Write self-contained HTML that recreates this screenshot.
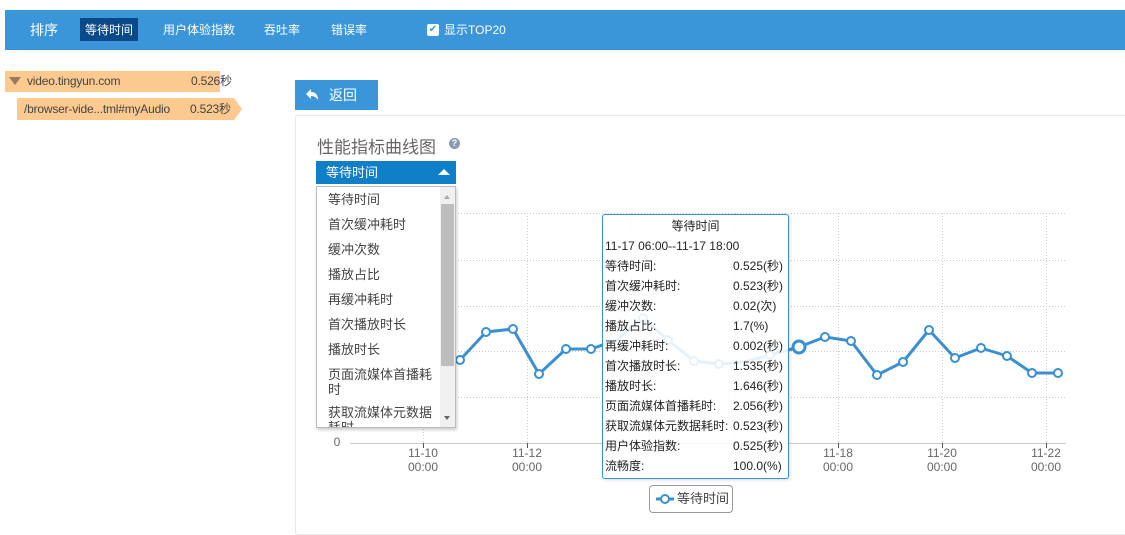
<!DOCTYPE html>
<html><head><meta charset="utf-8"><style>
*{margin:0;padding:0;box-sizing:border-box}
body{width:1125px;height:522px;background:#fff;font-family:"Liberation Sans","Noto Sans CJK SC",sans-serif;position:relative;overflow:hidden;color:#333}
.abs{position:absolute}
.nav{left:5px;top:10px;width:1120px;height:40px;background:#3a95d9}
.nav span{position:absolute;top:12px;font-size:12px;color:#fff;line-height:16px}
.tree{font-size:12px;color:#444;line-height:20px;letter-spacing:-0.2px}
.dd div{font-size:13px;color:#444;height:25px;line-height:25px;padding-left:11px}
.tt div{font-size:12px;line-height:20px;height:20px;color:#222;white-space:nowrap}
</style></head><body>
<div class="abs nav">
<span style="left:25px;font-size:14px">排序</span>
<div class="abs" style="left:75px;top:8px;width:58px;height:23px;background:#0a4a88"></div>
<span style="left:80px">等待时间</span>
<span style="left:158px">用户体验指数</span>
<span style="left:259px">吞吐率</span>
<span style="left:326px">错误率</span>
<div class="abs" style="left:422px;top:14px;width:12px;height:12px;background:#fff;border-radius:2px;color:#3a95d9;font-size:10px;line-height:12px;text-align:center">✔</div>
<span style="left:439px">显示TOP20</span>
</div>
<div class="abs tree" style="left:5px;top:71px;width:215px;height:21px;background:#fcc98f"></div>
<div class="abs" style="left:9px;top:77px;width:0;height:0;border-left:6px solid transparent;border-right:6px solid transparent;border-top:8px solid #9a7a5a"></div>
<div class="abs tree" style="left:27px;top:71px">video.tingyun.com</div>
<div class="abs tree" style="left:191px;top:71px">0.526秒</div>
<div class="abs" style="left:17px;top:98px;width:217px;height:22px;background:#fcc98f"></div>
<div class="abs" style="left:234px;top:98px;width:0;height:0;border-top:11px solid transparent;border-bottom:11px solid transparent;border-left:8px solid #fcc98f"></div>
<div class="abs tree" style="left:24px;top:99px">/browser-vide...tml#myAudio</div>
<div class="abs tree" style="left:190px;top:99px">0.523秒</div>

<div class="abs" style="left:295px;top:80px;width:83px;height:30px;background:#3a95d9;color:#fff;font-size:14px;line-height:30px">
<svg class="abs" style="left:10px;top:8px" width="14" height="14"><path d="M1 6 L6 1 L6 4 C10 4 13 6 13 12 C11 9 9 8 6 8 L6 11 Z" fill="#fff"/></svg>
<span style="position:absolute;left:34px">返回</span></div>
<div class="abs" style="left:295px;top:115px;width:840px;height:420px;border:1px solid #e8e8e8;border-radius:3px"></div>
<div class="abs" style="left:317px;top:133px;font-size:17px;color:#666">性能指标曲线图</div>
<div class="abs" style="left:449px;top:138px;width:11px;height:11px;border-radius:50%;background:#8a9bb0;color:#fff;font-size:9px;line-height:11px;text-align:center;font-weight:bold">?</div>

<svg class="abs" style="left:0;top:0" width="1125" height="522">
<g stroke="#ccc" stroke-dasharray="1,2" stroke-width="1">
<line x1="350" y1="213.5" x2="1066" y2="213.5"/><line x1="350" y1="260.5" x2="1066" y2="260.5"/><line x1="350" y1="306.5" x2="1066" y2="306.5"/><line x1="350" y1="351.5" x2="1066" y2="351.5"/><line x1="350" y1="397.5" x2="1066" y2="397.5"/>
<line x1="423.5" y1="213" x2="423.5" y2="443"/><line x1="527.5" y1="213" x2="527.5" y2="443"/><line x1="631.5" y1="213" x2="631.5" y2="443"/><line x1="735.5" y1="213" x2="735.5" y2="443"/><line x1="838.5" y1="213" x2="838.5" y2="443"/><line x1="942.5" y1="213" x2="942.5" y2="443"/><line x1="1046.5" y1="213" x2="1046.5" y2="443"/>
</g>
<line x1="350" y1="443.5" x2="1066" y2="443.5" stroke="#ccc"/>
<g stroke="#555"><line x1="423.5" y1="443" x2="423.5" y2="448"/><line x1="527.5" y1="443" x2="527.5" y2="448"/><line x1="838.5" y1="443" x2="838.5" y2="448"/><line x1="942.5" y1="443" x2="942.5" y2="448"/><line x1="1046.5" y1="443" x2="1046.5" y2="448"/></g>
<polyline fill="none" stroke="#3a8fd0" stroke-width="3" stroke-linejoin="round" points="433,352 460,360 486,332 513,329 539,374 566,349 591,349 617,340 643,318 668,340 694,361 719,364 745,362 770,355 799,347 825,337 851,341 877,375 903,362 929,330 955,358 981,348 1007,356 1032,373 1058,373"/>
<g fill="#fff" stroke="#3a8fd0" stroke-width="2">
<circle cx="460" cy="360" r="4"/><circle cx="486" cy="332" r="4"/><circle cx="513" cy="329" r="4"/><circle cx="539" cy="374" r="4"/><circle cx="566" cy="349" r="4"/><circle cx="591" cy="349" r="4"/><circle cx="643" cy="318" r="4"/><circle cx="668" cy="340" r="4"/><circle cx="694" cy="361" r="4"/><circle cx="719" cy="364" r="4"/><circle cx="770" cy="355" r="4"/><circle cx="799" cy="347" r="6" stroke-width="3"/><circle cx="825" cy="337" r="4"/><circle cx="851" cy="341" r="4"/><circle cx="877" cy="375" r="4"/><circle cx="903" cy="362" r="4"/><circle cx="929" cy="330" r="4"/><circle cx="955" cy="358" r="4"/><circle cx="981" cy="348" r="4"/><circle cx="1007" cy="356" r="4"/><circle cx="1032" cy="373" r="4"/><circle cx="1058" cy="373" r="4"/>
</g>
<g font-family="Liberation Sans,sans-serif" font-size="12" fill="#666" text-anchor="middle">
<text x="337" y="446">0</text>
<text x="423" y="457">11-10</text><text x="423" y="471">00:00</text>
<text x="527" y="457">11-12</text><text x="527" y="471">00:00</text>
<text x="838" y="457">11-18</text><text x="838" y="471">00:00</text>
<text x="942" y="457">11-20</text><text x="942" y="471">00:00</text>
<text x="1046" y="457">11-22</text><text x="1046" y="471">00:00</text>
</g>
</svg>

<div class="abs" style="left:316px;top:161px;width:140px;height:23px;background:#0f7fc8;color:#fff;font-size:13px;line-height:23px;padding-left:10px">等待时间</div>
<div class="abs" style="left:438px;top:169px;width:0;height:0;border-left:6px solid transparent;border-right:6px solid transparent;border-bottom:6px solid #fff"></div>
<div class="abs dd" style="left:316px;top:186px;width:140px;height:242px;background:#fff;border:1px solid #bbb;box-shadow:1px 2px 3px rgba(0,0,0,.2);overflow:hidden">
<div>等待时间</div><div>首次缓冲耗时</div><div>缓冲次数</div><div>播放占比</div><div>再缓冲耗时</div><div>首次播放时长</div><div>播放时长</div>
<div style="line-height:15px;height:40px;padding-top:5px;width:122px">页面流媒体首播耗时</div>
<div style="line-height:15px;width:122px;padding-top:3px">获取流媒体元数据耗时</div>
<div class="abs" style="left:123px;top:0;width:16px;height:240px;background:#f0f0f0;padding:0"></div>
<div class="abs" style="left:124px;top:17px;width:13px;height:162px;background:#bdbdbd;padding:0"></div>
<div class="abs" style="left:127px;top:8px;width:0;height:0;border-left:3px solid transparent;border-right:3px solid transparent;border-bottom:4px solid #aaa;padding:0"></div>
<div class="abs" style="left:127px;top:229px;width:0;height:0;border-left:3px solid transparent;border-right:3px solid transparent;border-top:4px solid #666;padding:0"></div>
</div>

<div class="abs tt" style="left:602px;top:214px;width:187px;height:265px;background:rgba(255,255,255,.88);border:1px solid #3a8fd0;border-radius:3px;padding:1px 0 0 2px;box-shadow:1px 1px 3px rgba(0,0,0,.15)">
<div style="text-align:center;padding-right:2px">等待时间</div>
<div>11-17 06:00--11-17 18:00</div>
<div>等待时间:<span class="abs" style="left:130px">0.525(秒)</span></div>
<div>首次缓冲耗时:<span class="abs" style="left:130px">0.523(秒)</span></div>
<div>缓冲次数:<span class="abs" style="left:130px">0.02(次)</span></div>
<div>播放占比:<span class="abs" style="left:130px">1.7(%)</span></div>
<div>再缓冲耗时:<span class="abs" style="left:130px">0.002(秒)</span></div>
<div>首次播放时长:<span class="abs" style="left:130px">1.535(秒)</span></div>
<div>播放时长:<span class="abs" style="left:130px">1.646(秒)</span></div>
<div>页面流媒体首播耗时:<span class="abs" style="left:130px">2.056(秒)</span></div>
<div>获取流媒体元数据耗时:<span class="abs" style="left:130px">0.523(秒)</span></div>
<div>用户体验指数:<span class="abs" style="left:130px">0.525(秒)</span></div>
<div>流畅度:<span class="abs" style="left:130px">100.0(%)</span></div>
</div>

<div class="abs" style="left:649px;top:485px;width:84px;height:28px;border:1px solid #999;border-radius:4px;font-size:13px;line-height:26px;color:#444;padding-left:27px">等待时间</div>
<svg class="abs" style="left:655px;top:492px" width="20" height="14"><line x1="1" y1="7" x2="19" y2="7" stroke="#3a8fd0" stroke-width="3"/><circle cx="10" cy="7" r="4" fill="#fff" stroke="#3a8fd0" stroke-width="2"/></svg>
</body></html>
